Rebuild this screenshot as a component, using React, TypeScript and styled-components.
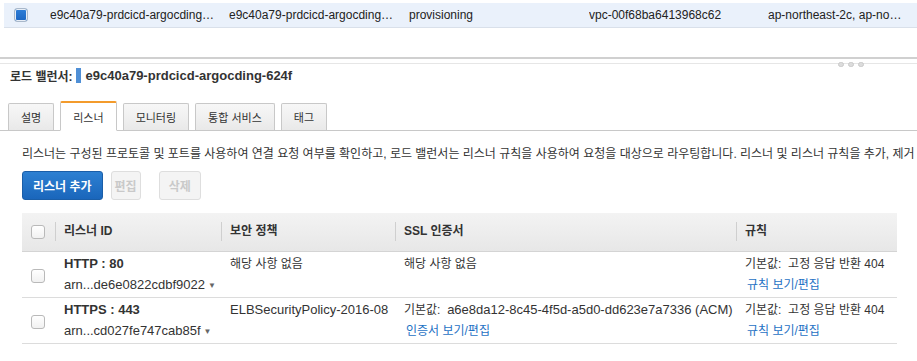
import React from 'react';
import styled, { createGlobalStyle } from 'styled-components';

const GlobalStyle = createGlobalStyle`
  * { box-sizing: border-box; }
  body {
    margin: 0;
    font-family: "Liberation Sans", "Noto Sans CJK KR", sans-serif;
    font-size: 12px;
    color: #333;
    background: #fff;
    overflow: hidden;
  }
`;

const Page = styled.div`
  width: 917px;
  height: 361px;
  overflow: hidden;
`;

const SelectedRow = styled.div`
  margin: 3px 0 0 4px;
  height: 25px;
  display: grid;
  grid-template-columns: 46px 179px 180px 180px 179px 1fr;
  align-items: center;
  background: #eaf1fb;
  border-bottom: 1px solid #d9e0ea;
  color: #222;
`;

const Cell = styled.div`
  white-space: nowrap;
  overflow: hidden;
  text-overflow: ellipsis;
  padding-right: 12px;
`;

const BoxCell = styled.div<{ $inset?: number }>`
  padding-left: ${p => p.$inset ?? 10}px;
  display: flex;
  align-items: center;
`;

const Check = styled.span<{ $checked?: boolean }>`
  display: inline-block;
  width: 14px;
  height: 14px;
  border-radius: 3px;
  border: 1px solid ${p => (p.$checked ? '#a9b8ca' : '#b9b9b9')};
  background: ${p =>
    p.$checked
      ? 'linear-gradient(#2f7fd8, #1c66c2)'
      : 'linear-gradient(#ffffff, #f1f1f1)'};
  box-shadow: ${p => (p.$checked ? 'inset 0 0 0 1px #e8eef6' : 'none')};
`;

const Splitter = styled.div`
  margin-top: 29px;
  border-top: 2px solid #d0d0d0;
  position: relative;
  height: 7px;
  border-bottom: 1px solid #e6e6e6;
`;

const Grip = styled.div`
  position: absolute;
  left: 838px;
  top: 3px;
  display: flex;
  gap: 4px;
`;

const GripDot = styled.span`
  width: 6px;
  height: 5px;
  border-radius: 3px;
  background: #dcdcdc;
  border: 1px solid #c9c9c9;
`;

const Title = styled.div`
  margin-top: 2px;
  padding-left: 10px;
  height: 18px;
  display: flex;
  align-items: center;
  font-weight: bold;
  font-size: 12px;
  color: #333;
`;

const TitleName = styled.span`
  font-size: 13px;
`;

const Marker = styled.span`
  width: 5px;
  height: 15px;
  background: #4f8fd6;
  margin: 0 5px 0 3px;
`;

const TabBar = styled.div`
  margin-top: 17px;
  display: flex;
  align-items: flex-end;
  gap: 6px;
  padding-left: 8px;
  border-bottom: 1px solid #c8c8c8;
  height: 30px;
`;

const Tab = styled.div<{ $active?: boolean }>`
  height: ${p => (p.$active ? '30px' : '27px')};
  padding: 0 12px;
  display: flex;
  align-items: center;
  font-size: 11px;
  color: #333;
  border: 1px solid #c8c8c8;
  border-top: ${p => (p.$active ? '2px solid #f39b2c' : '1px solid #c8c8c8')};
  border-bottom: ${p => (p.$active ? '1px solid #fff' : 'none')};
  margin-bottom: ${p => (p.$active ? '-1px' : '0')};
  background: ${p => (p.$active ? '#fff' : 'linear-gradient(#f7f7f7, #e9e9e9)')};
  border-radius: 2px 2px 0 0;
`;

const Description = styled.div`
  margin-top: 15px;
  padding-left: 22px;
  line-height: 16px;
  white-space: nowrap;
  color: #333;
`;

const Toolbar = styled.div`
  margin-top: 9px;
  padding-left: 22px;
  display: flex;
  gap: 8px;
`;

const Button = styled.button<{ $primary?: boolean; $pad?: number; $shift?: number }>`
  height: 29px;
  padding: 0 ${p => p.$pad ?? 10}px;
  margin-left: ${p => p.$shift ?? 0}px;
  font-family: inherit;
  font-size: 12px;
  font-weight: bold;
  border-radius: 3px;
  border: 1px solid ${p => (p.$primary ? '#1a5ea8' : '#dedede')};
  color: ${p => (p.$primary ? '#fff' : '#c9c9c9')};
  background: ${p =>
    p.$primary ? 'linear-gradient(#2d80d2, #1a66bb)' : '#f4f4f4'};
`;

const Table = styled.table`
  margin: 13px 0 0 22px;
  width: 875px;
  border-collapse: collapse;
  table-layout: fixed;
`;

const Th = styled.th<{ $w: number }>`
  width: ${p => p.$w}px;
  height: 38px;
  padding: 0;
  text-align: left;
  font-weight: bold;
  color: #333;
  background: linear-gradient(#f3f3f3, #e7e7e7);
  border-bottom: 1px solid #d4d4d4;
`;

const HeadLabel = styled.div`
  border-left: 1px solid #cfcfcf;
  line-height: 19px;
  padding-left: 8px;
`;

const BoxTd = styled.td`
  padding: 6px 0 0 9px;
  vertical-align: middle;
  border-bottom: 1px solid #dcdcdc;
`;

const Td = styled.td`
  padding: 4px 4px 3px 9px;
  vertical-align: top;
  border-bottom: 1px solid #dcdcdc;
  white-space: nowrap;
  overflow: hidden;
`;

const Line = styled.div<{ $bold?: boolean; $latin?: boolean }>`
  line-height: 16px;
  font-size: ${p => (p.$latin ? '13px' : '12px')};
  font-weight: ${p => (p.$bold ? 'bold' : 'normal')};
  white-space: pre;
  color: #333;
`;

const LatinRun = styled.span`
  font-size: 13px;
`;

const SubLine = styled.div`
  margin-top: 5px;
  line-height: 16px;
  font-size: 13px;
  color: #333;
  white-space: pre;
`;

const Link = styled.a`
  display: block;
  margin-top: 5px;
  padding-left: 2px;
  line-height: 16px;
  color: #1f72c4;
  text-decoration: none;
`;

const Caret = styled.span`
  font-size: 8px;
  color: #666;
  margin-left: 3px;
  vertical-align: 1px;
`;

type Listener = {
  proto: string;
  arn: string;
  policy: string;
  policyLatin?: boolean;
  certPrefix?: string;
  cert: string;
  certLink?: string;
  rule: string;
};

const listeners: Listener[] = [
  {
    proto: 'HTTP : 80',
    arn: 'arn...de6e0822cdbf9022',
    policy: '해당 사항 없음',
    cert: '해당 사항 없음',
    rule: '기본값:  고정 응답 반환 404',
  },
  {
    proto: 'HTTPS : 443',
    arn: 'arn...cd027fe747cab85f',
    policy: 'ELBSecurityPolicy-2016-08',
    policyLatin: true,
    certPrefix: '기본값:  ',
    cert: 'a6e8da12-8c45-4f5d-a5d0-dd623e7a7336 (ACM)',
    certLink: '인증서 보기/편집',
    rule: '기본값:  고정 응답 반환 404',
  },
];

const tabs = ['설명', '리스너', '모니터링', '통합 서비스', '태그'];

export default function App() {
  return (
    <Page>
      <GlobalStyle />
      <SelectedRow>
        <BoxCell>
          <Check $checked />
        </BoxCell>
        <Cell>e9c40a79-prdcicd-argocding-624f</Cell>
        <Cell>e9c40a79-prdcicd-argocding-624f</Cell>
        <Cell>provisioning</Cell>
        <Cell>vpc-00f68ba6413968c62</Cell>
        <Cell>ap-northeast-2c, ap-northeast-2a</Cell>
      </SelectedRow>

      <Splitter>
        <Grip>
          <GripDot />
          <GripDot />
          <GripDot />
        </Grip>
      </Splitter>

      <Title>
        로드 밸런서:
        <Marker />
        <TitleName>e9c40a79-prdcicd-argocding-624f</TitleName>
      </Title>

      <TabBar>
        {tabs.map(t => (
          <Tab key={t} $active={t === '리스너'}>
            {t}
          </Tab>
        ))}
      </TabBar>

      <Description>
        리스너는 구성된 프로토콜 및 포트를 사용하여 연결 요청 여부를 확인하고, 로드 밸런서는 리스너 규칙을 사용하여 요청을 대상으로 라우팅합니다. 리스너 및 리스너 규칙을 추가, 제거 또는 업데이트할 수 있습니다.
      </Description>

      <Toolbar>
        <Button $primary>리스너 추가</Button>
        <Button $pad={3}>편집</Button>
        <Button $pad={9} $shift={10}>삭제</Button>
      </Toolbar>

      <Table>
        <thead>
          <tr>
            <Th $w={33}>
              <BoxCell $inset={9}>
                <Check />
              </BoxCell>
            </Th>
            <Th $w={166}>
              <HeadLabel>리스너 ID</HeadLabel>
            </Th>
            <Th $w={174}>
              <HeadLabel>보안 정책</HeadLabel>
            </Th>
            <Th $w={341}>
              <HeadLabel>SSL 인증서</HeadLabel>
            </Th>
            <Th $w={161}>
              <HeadLabel>규칙</HeadLabel>
            </Th>
          </tr>
        </thead>
        <tbody>
          {listeners.map(l => (
            <tr key={l.proto}>
              <BoxTd>
                <Check />
              </BoxTd>
              <Td>
                <Line $bold $latin>{l.proto}</Line>
                <SubLine>
                  {l.arn}
                  <Caret>▼</Caret>
                </SubLine>
              </Td>
              <Td>
                <Line $latin={l.policyLatin}>{l.policy}</Line>
              </Td>
              <Td>
                {l.certPrefix ? (
                  <Line>
                    {l.certPrefix}
                    <LatinRun>{l.cert}</LatinRun>
                  </Line>
                ) : (
                  <Line>{l.cert}</Line>
                )}
                {l.certLink && <Link>{l.certLink}</Link>}
              </Td>
              <Td>
                <Line>{l.rule}</Line>
                <Link>규칙 보기/편집</Link>
              </Td>
            </tr>
          ))}
        </tbody>
      </Table>
    </Page>
  );
}
